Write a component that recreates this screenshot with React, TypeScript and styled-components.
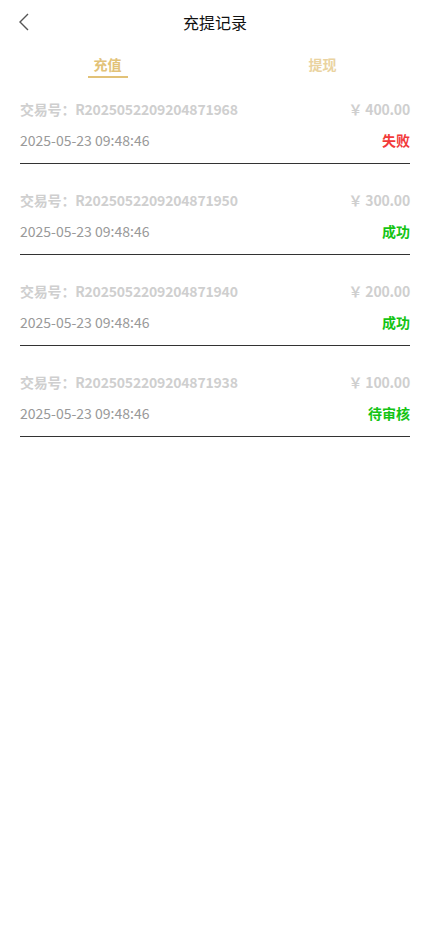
import React, { useState } from "react";
import styled, { createGlobalStyle } from "styled-components";

type Status = "fail" | "success" | "pending";

interface Record {
  no: string;
  amount: string;
  time: string;
  status: Status;
}

const records: Record[] = [
  { no: "R2025052209204871968", amount: "400.00", time: "2025-05-23 09:48:46", status: "fail" },
  { no: "R2025052209204871950", amount: "300.00", time: "2025-05-23 09:48:46", status: "success" },
  { no: "R2025052209204871940", amount: "200.00", time: "2025-05-23 09:48:46", status: "success" },
  { no: "R2025052209204871938", amount: "100.00", time: "2025-05-23 09:48:46", status: "pending" },
];

const statusText: { [k in Status]: string } = {
  fail: "失败",
  success: "成功",
  pending: "待审核",
};

const GlobalStyle = createGlobalStyle`
  body {
    margin: 0;
    background: #fff;
    font-family: "Noto Sans CJK SC", "Noto Sans", sans-serif;
  }
`;

const Page = styled.div`
  width: 430px;
  min-height: 932px;
  background: #fff;
`;

const NavBar = styled.header`
  position: relative;
  height: 44px;
  display: flex;
  align-items: center;
  justify-content: center;
`;

const BackButton = styled.button`
  position: absolute;
  left: 12px;
  top: 10px;
  width: 24px;
  height: 24px;
  padding: 0;
  border: none;
  background: none;
  display: flex;
  align-items: center;
  justify-content: center;
`;

const Title = styled.h1`
  margin: 0;
  font-size: 16px;
  font-weight: 400;
  color: #111;
`;

const Tabs = styled.div`
  display: flex;
  height: 34px;
`;

const Tab = styled.div<{ $active?: boolean }>`
  flex: 1;
  display: flex;
  flex-direction: column;
  align-items: center;
  padding-top: 9px;
  font-size: 14px;
  font-weight: 700;
  line-height: 22px;
  color: ${(p) => (p.$active ? "#e2c278" : "#ead3a0")};
  cursor: pointer;

  &::after {
    content: "";
    margin-top: 1px;
    width: 40px;
    height: 2px;
    background: ${(p) => (p.$active ? "#e2c278" : "transparent")};
  }
`;

const List = styled.div`
  padding: 0 20px;
`;

const Row = styled.div`
  padding: 25px 0 12px;
  border-bottom: 1px solid #333;

  &:first-child {
    padding-top: 20px;
  }
`;

const Line = styled.div<{ $gap?: boolean }>`
  display: flex;
  justify-content: space-between;
  align-items: center;
  height: 22px;
  margin-top: ${(p) => (p.$gap ? "9px" : "0")};
  font-size: 14px;
`;

const TradeNo = styled.span`
  color: #cfcfcf;
  font-weight: 700;
  letter-spacing: -0.2px;
`;

const Amount = styled.span`
  color: #cfcfcf;
  font-weight: 700;
  letter-spacing: -0.2px;
`;

const Time = styled.span`
  color: #999;
`;

const StatusLabel = styled.span<{ $status: Status }>`
  font-weight: 700;
  color: ${(p) => (p.$status === "fail" ? "#f23a3a" : "#14c414")};
`;

const App = () => {
  const [tab, setTab] = useState(0);

  return (
    <Page>
      <GlobalStyle />
      <NavBar>
        <BackButton>
          <svg width="14" height="20" viewBox="0 0 14 20" fill="none">
            <path d="M11 2 L3 10 L11 18" stroke="#555" strokeWidth="1.4" />
          </svg>
        </BackButton>
        <Title>充提记录</Title>
      </NavBar>
      <Tabs>
        <Tab $active={tab === 0} onClick={() => setTab(0)}>充值</Tab>
        <Tab $active={tab === 1} onClick={() => setTab(1)}>提现</Tab>
      </Tabs>
      <List>
        {records.map((r) => (
          <Row key={r.no}>
            <Line>
              <TradeNo>交易号：{r.no}</TradeNo>
              <Amount>￥ {r.amount}</Amount>
            </Line>
            <Line $gap>
              <Time>{r.time}</Time>
              <StatusLabel $status={r.status}>{statusText[r.status]}</StatusLabel>
            </Line>
          </Row>
        ))}
      </List>
    </Page>
  );
};

export default App;
